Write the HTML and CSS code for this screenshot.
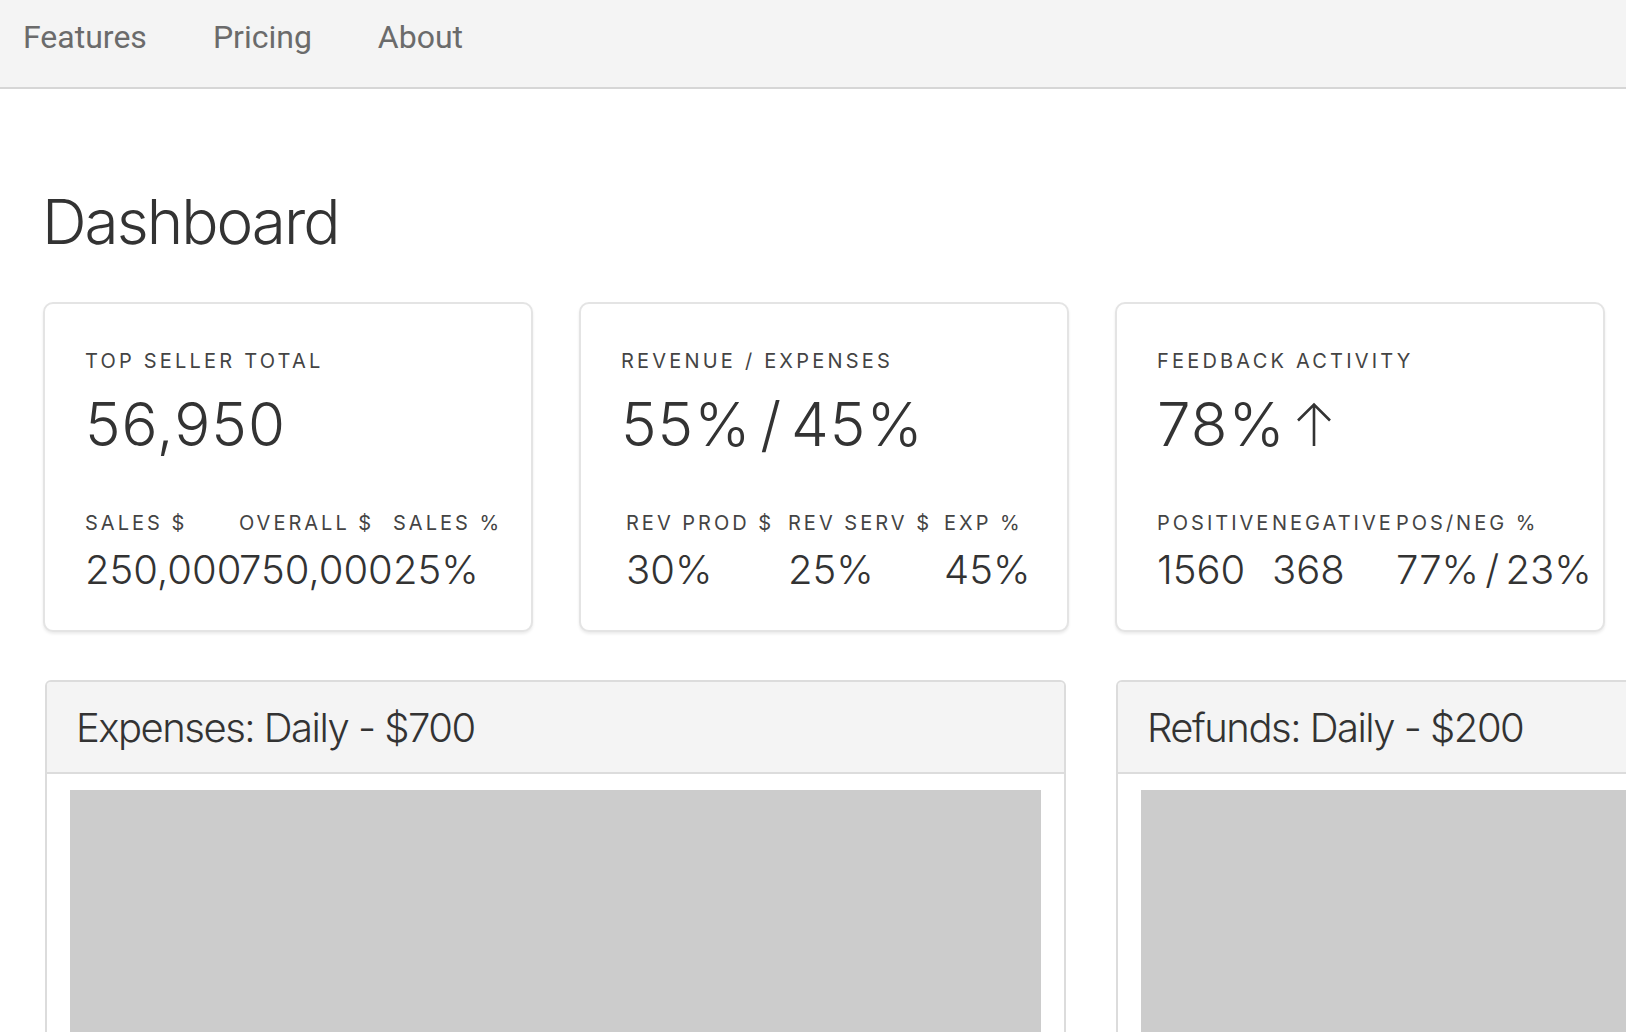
FILE: index.html
```html
<!DOCTYPE html>
<html lang="en">
<head>
<meta charset="utf-8">
<title>Dashboard</title>
<link rel="stylesheet" href="styles.css">
</head>
<body>
<nav class="topnav">
  <a class="topnav-link" href="#">Features</a>
  <a class="topnav-link" href="#">Pricing</a>
  <a class="topnav-link" href="#">About</a>
</nav>
<main class="page">
  <h1 class="page-title">Dashboard</h1>
  <section class="cards">
    <article class="card">
      <div class="card-label">TOP SELLER TOTAL</div>
      <div class="card-value">56,950</div>
      <div class="stats stats-sales">
        <div class="stat-label">SALES $</div>
        <div class="stat-label">OVERALL $</div>
        <div class="stat-label">SALES %</div>
        <div class="stat-value">250,000</div>
        <div class="stat-value">750,000</div>
        <div class="stat-value">25%</div>
      </div>
    </article>
    <article class="card">
      <div class="card-label">REVENUE / EXPENSES</div>
      <div class="card-value">55% / 45%</div>
      <div class="stats stats-revenue">
        <div class="stat-label">REV PROD $</div>
        <div class="stat-label">REV SERV $</div>
        <div class="stat-label">EXP %</div>
        <div class="stat-value">30%</div>
        <div class="stat-value">25%</div>
        <div class="stat-value">45%</div>
      </div>
    </article>
    <article class="card">
      <div class="card-label">FEEDBACK ACTIVITY</div>
      <div class="card-value">78%<svg class="arrow" width="38" height="44" viewBox="0 0 38 44" aria-hidden="true"><path d="M19 2.5V44M3 18.5L19 2.5L35 18.5" fill="none" stroke="#333333" stroke-width="2.6" stroke-linecap="butt" stroke-linejoin="miter"/></svg></div>
      <div class="stats stats-feedback">
        <div class="stat-label">POSITIVE</div>
        <div class="stat-label">NEGATIVE</div>
        <div class="stat-label">POS/NEG %</div>
        <div class="stat-value">1560</div>
        <div class="stat-value">368</div>
        <div class="stat-value">77% / 23%</div>
      </div>
    </article>
  </section>
  <section class="panels">
    <article class="panel">
      <header class="panel-header">Expenses: Daily - $700</header>
      <div class="panel-body">
        <div class="placeholder">1000 × 500</div>
      </div>
    </article>
    <article class="panel">
      <header class="panel-header">Refunds: Daily - $200</header>
      <div class="panel-body">
        <div class="placeholder">1000 × 500</div>
      </div>
    </article>
  </section>
</main>
</body>
</html>
```

FILE: styles.css
```css
html, body {
  margin: 0;
  padding: 0;
  overflow: hidden;
  background: #ffffff;
}

body {
  font-family: "Inter", "Liberation Sans", sans-serif;
  color: #333333;
}

.topnav {
  display: flex;
  gap: 66px;
  height: 89px;
  padding: 18px 0 0 23px;
  box-sizing: border-box;
  background: #f4f4f4;
  border-bottom: 2px solid #d6d6d6;
}

.topnav-link {
  font-family: "Roboto", "Liberation Sans", sans-serif;
  font-size: 32px;
  line-height: 38px;
  color: #6b6b6b;
  text-decoration: none;
}

.page {
  padding: 0 0 0 43px;
  overflow: hidden;
}

.page-title {
  margin: 95px 0 43px -1px;
  font-size: 62px;
  font-weight: 300;
  line-height: 75px;
  letter-spacing: -2px;
  color: #333333;
}

.cards {
  display: grid;
  grid-template-columns: 490px 490px 490px;
  column-gap: 46px;
}

.card {
  box-sizing: border-box;
  height: 330px;
  padding: 45px 0 0 40px;
  border: 2px solid #e4e4e4;
  border-radius: 10px;
  box-shadow: 0 2px 3px rgba(0, 0, 0, 0.08);
  background: #ffffff;
}

.card-label {
  font-size: 20px;
  line-height: 24px;
  letter-spacing: 3.2px;
  color: #444444;
  white-space: nowrap;
}

.card-value {
  display: flex;
  align-items: flex-start;
  margin-top: 15px;
  font-size: 60px;
  font-weight: 300;
  line-height: 72px;
  letter-spacing: 1px;
  word-spacing: -9px;
  white-space: pre;
  color: #333333;
}

.arrow {
  margin: 14px 0 0 9px;
  flex: none;
}

.stats {
  display: grid;
  margin-top: 51px;
  row-gap: 11px;
}

.stats-sales { grid-template-columns: 154px 154px auto; }
.stats-revenue { grid-template-columns: 162px 156px auto; margin-left: 5px; }
.stats-feedback { grid-template-columns: 115px 124px auto; }

.stat-label {
  font-size: 20px;
  line-height: 24px;
  letter-spacing: 3px;
  color: #444444;
  white-space: nowrap;
}

.stat-value {
  font-size: 40px;
  font-weight: 300;
  line-height: 48px;
  word-spacing: -5px;
  color: #333333;
  white-space: nowrap;
}

.panels {
  display: grid;
  grid-template-columns: 1021px 1021px;
  column-gap: 50px;
  margin: 48px 0 0 2px;
}

.panel {
  box-sizing: border-box;
  border: 2px solid #dcdcdc;
  border-radius: 6px 6px 0 0;
  background: #ffffff;
}

.panel-header {
  box-sizing: border-box;
  height: 92px;
  padding: 22px 0 0 29px;
  background: #f4f4f4;
  border-bottom: 2px solid #dcdcdc;
  border-radius: 4px 4px 0 0;
  font-size: 40px;
  font-weight: 300;
  line-height: 48px;
  letter-spacing: -1.5px;
  color: #333333;
  white-space: nowrap;
}

.panel-body {
  padding: 16px 23px 23px;
}

.placeholder {
  display: flex;
  align-items: center;
  justify-content: center;
  height: 584px;
  background: #cccccc;
  color: #969696;
  font-size: 70px;
  font-weight: 600;
}
```
